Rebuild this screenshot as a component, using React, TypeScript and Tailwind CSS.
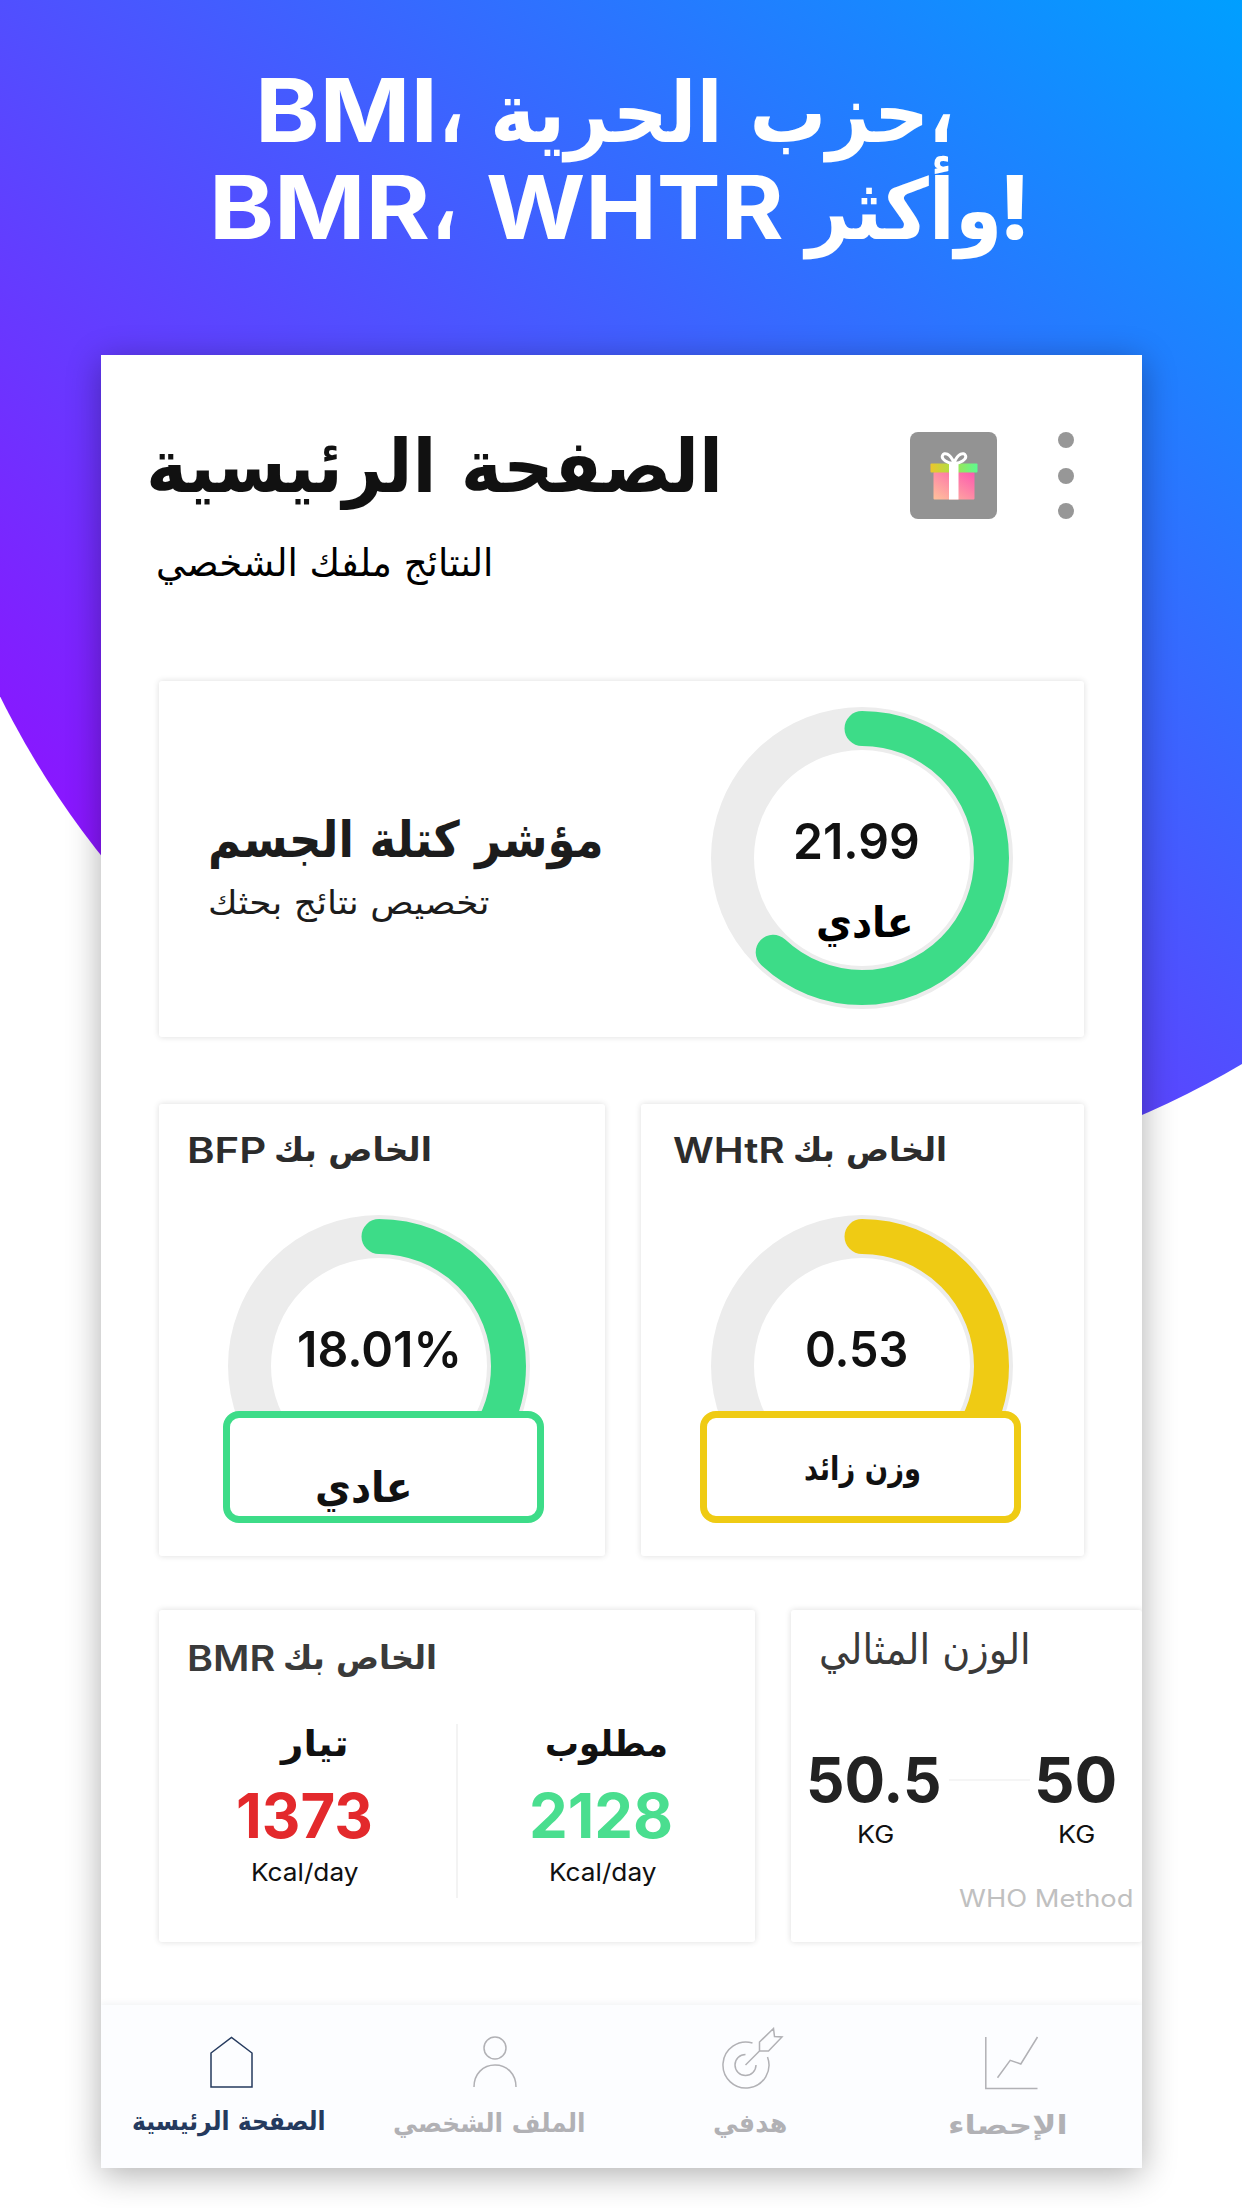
import { useLayoutEffect, useRef, useState } from "react";
import type { ReactNode } from "react";

const GREEN = "#3ddc88";
const YELLOW = "#efcb14";

interface FitProps {
  className: string;
  children: ReactNode;
}

// Stretches one line of text to the width of its box
function Fit({ className, children }: FitProps) {
  const inner = useRef<HTMLSpanElement>(null);
  const [scale, setScale] = useState(1);

  useLayoutEffect(() => {
    const el = inner.current;
    if (!el || !el.parentElement) return;
    setScale(el.parentElement.clientWidth / el.offsetWidth);
  }, [children]);

  return (
    <span className={"block shrink-0 " + className}>
      <span ref={inner} className="inline-block origin-left whitespace-nowrap" style={{ transform: `scaleX(${scale})` }}>
        {children}
      </span>
    </span>
  );
}

interface RingProps {
  value: number; // 0..1
  color: string;
  children: ReactNode;
}

function Ring({ value, color, children }: RingProps) {
  const length = 2 * Math.PI * 129.5;
  return (
    <div className="relative h-[302px] w-[302px] shrink-0">
      <svg viewBox="0 0 302 302" className="h-full w-full" fill="none">
        <circle cx="151" cy="151" r="129.5" stroke="#ececec" strokeWidth="43" />
        <circle
          cx="151"
          cy="151"
          r="129.5"
          stroke={color}
          strokeWidth="35"
          strokeLinecap="round"
          strokeDasharray={`${length * value} ${length}`}
          transform="rotate(-90 151 151)"
        />
      </svg>
      <div className="absolute inset-0 pt-[109px]">{children}</div>
    </div>
  );
}

const card = "rounded-[3px] bg-white shadow-[0_0_6px_rgba(0,0,0,0.14)]";
const navIcon = "h-16 w-20";
const arabic = "font-['DejaVu_Sans',sans-serif]";

function Backdrop() {
  return (
    <svg className="absolute inset-0 h-[2208px] w-[1242px]" viewBox="0 0 1242 2208">
      <defs>
        <linearGradient id="sky" gradientUnits="userSpaceOnUse" x1="-391" y1="455" x2="527" y2="-614">
          <stop offset="0" stopColor="#8c14ff" />
          <stop offset="1" stopColor="#009fff" />
        </linearGradient>
      </defs>
      <circle cx="791" cy="306" r="882" fill="url(#sky)" />
    </svg>
  );
}

function Gift() {
  return (
    <div className="flex h-[87px] w-[87px] items-center justify-center rounded-lg bg-[#939393]">
      <svg viewBox="0 0 48 48" className="h-12 w-12" fill="none">
        <defs>
          <linearGradient id="lid" x1="0" x2="1">
            <stop offset="0" stopColor="#ecc62c" />
            <stop offset="0.4" stopColor="#b4dc42" />
            <stop offset="1" stopColor="#5cfb90" />
          </linearGradient>
          <linearGradient id="box" x1="0" y1="1" x2="1" y2="0">
            <stop offset="0" stopColor="#ffc29a" />
            <stop offset="1" stopColor="#fd57b0" />
          </linearGradient>
        </defs>
        <rect x="3.5" y="20" width="41" height="27.5" rx="1" fill="url(#box)" />
        <rect x="0.5" y="11.5" width="47" height="9" rx="1" fill="url(#lid)" />
        <rect x="19" y="11" width="9.5" height="36.500" fill="#fff" />
        <path
          d="M24 11C18 12 11 7 12.5 3.5S20 1 24 11C28 1 34 0 35.5 3.5S30 12 24 11Z"
          stroke="#fff"
          strokeWidth="3"
          strokeLinejoin="round"
        />
      </svg>
    </div>
  );
}

interface EnergyProps {
  label: ReactNode;
  value: ReactNode;
  unitClass: string;
}

function Energy({ label, value, unitClass }: EnergyProps) {
  return (
    <div className="flex-1">
      {label}
      {value}
      <Fit className={"mt-[11px] h-[30px] w-[107px] text-[24.5px] leading-[30px] text-[#111] " + unitClass}>Kcal/day</Fit>
    </div>
  );
}

function BottomNav() {
  return (
    <nav className="mt-[63px] grid h-[163px] grid-cols-4 bg-[#fcfdff] pt-[22px] font-bold text-[#b1b1b5] shadow-[0_-2px_6px_rgba(30,50,90,0.06)]">
      <div className="flex flex-col items-center text-[#253a5e]">
        <svg viewBox="0 0 80 64" className={navIcon} fill="none" stroke="currentColor" strokeWidth="1.5">
          <path d="M20 26 40.500 10.500 61 26V60H20Z" />
        </svg>
        <Fit className={"mt-2.5 mr-1 h-10 w-[194px] text-[26px] leading-10 " + arabic}>الصفحة الرئيسية</Fit>
      </div>
      <div className="flex flex-col items-center">
        <svg viewBox="0 0 80 64" className={navIcon} fill="none" stroke="currentColor" strokeWidth="1.5">
          <circle cx="44" cy="21" r="11" />
          <path d="M23 60C23 47 32 38 44 38S65 47 65 60" />
        </svg>
        <Fit className={"mt-3 mr-1 h-10 w-[193px] text-[26px] leading-10 " + arabic}>الملف الشخصي</Fit>
      </div>
      <div className="flex flex-col items-center">
        <svg viewBox="0 0 80 64" className={navIcon} fill="none" stroke="currentColor" strokeWidth="1.5">
          <path d="M40.5 16A23 23 0 1 0 55.5 30" />
          <path d="M33.5 27.500A10.500 10.500 0 1 0 44 38" />
          <path d="M33.5 38 47.5 24V15L61.500 1.500 62.500 9.500 70 10 56.500 24H47.5" />
        </svg>
        <Fit className={"mt-3 mr-1 h-10 w-[74px] text-[26px] leading-10 " + arabic}>هدفي</Fit>
      </div>
      <div className="flex flex-col items-center">
        <svg viewBox="0 0 80 64" className={navIcon} fill="none" stroke="currentColor" strokeWidth="1.5">
          <path d="M13.8 10V61.5H65.5" />
          <path d="M25.5 50.7 38.2 33.3 48.8 37 65.500 10" />
        </svg>
        <Fit className={"mt-3.5 mr-2 h-10 w-[120px] text-[26px] leading-10 " + arabic}>الإحصاء</Fit>
      </div>
    </nav>
  );
}

export default function App() {
  return (
    <div className="relative h-[2208px] w-[1242px] overflow-hidden bg-white font-['Inter',sans-serif]">
      <Backdrop />

      <div className="relative flex flex-col">
        <h1 className="h-[355px] pt-[62px] font-bold text-white">
          <div className="ml-[255px] flex h-[97px] leading-[97px]">
            <Fit className="w-[183px] text-[88px]">BMI</Fit>
            <Fit className={"mr-[26px] ml-[1px] w-[25px] pt-[3px] text-[84px] " + arabic}>،</Fit>
            <Fit className={"w-[439px] pt-[3px] text-[84px] " + arabic}>حزب الحرية</Fit>
            <Fit className={"w-[25px] pt-[3px] text-[84px] " + arabic}>،</Fit>
          </div>
          <div className="ml-[209px] flex h-[97px] leading-[97px]">
            <Fit className="w-[221px] text-[88px]">BMR</Fit>
            <Fit className={"mr-[29px] ml-[2px] w-[25px] pt-[3px] text-[84px] " + arabic}>،</Fit>
            <Fit className="w-[298px] text-[88px]">WHTR</Fit>
            <Fit className={"ml-[22px] w-[196px] pt-[3px] text-[84px] " + arabic}>وأكثر</Fit>
            <Fit className="-ml-[3px] w-[32px] text-[88px] font-extrabold">!</Fit>
          </div>
        </h1>

        <main className="ml-[101px] w-[1041px] bg-white shadow-[0_6px_32px_rgba(0,0,0,0.32)]">
          <div className="overflow-hidden">
            <header className="flex h-[326px] items-start justify-between pr-[68px] pl-[45px]">
              <div className={"pt-[66px] " + arabic}>
                <Fit className="h-[90px] w-[577px] text-[74px] leading-[90px] font-bold text-[#111]">الصفحة الرئيسية</Fit>
                <Fit className="mt-[27px] ml-2.5 h-[50px] w-[337px] text-[38px] leading-[50px] text-black">
                  النتائج ملفك الشخصي
                </Fit>
              </div>
              <div className="flex gap-[61px] pt-[77px]">
                <Gift />
                <div className="flex flex-col justify-between">
                  <i className="h-4 w-4 rounded-full bg-[#979797]" />
                  <i className="h-4 w-4 rounded-full bg-[#979797]" />
                  <i className="h-4 w-4 rounded-full bg-[#979797]" />
                </div>
              </div>
            </header>

            <section className={"mx-[58px] flex h-[356px] pl-[49px] " + card}>
              <div className={"w-[503px] pt-[134px] text-[#1c1c1c] " + arabic}>
                <Fit className="h-[50px] w-[396px] text-[50px] leading-[50px] font-bold">مؤشر كتلة الجسم</Fit>
                <Fit className="mt-[18px] h-10 w-[281px] text-[33px] leading-10">تخصيص نتائج بحثك</Fit>
              </div>
              <div className="pt-[26px]">
                <Ring value={0.62} color={GREEN}>
                  <Fit className="ml-[82px] h-[50px] w-[127px] text-[50px] leading-[50px] font-semibold text-[#111]">21.99</Fit>
                  <Fit className={"mt-[32px] ml-[105px] h-[50px] w-[98px] text-[42px] leading-[50px] font-bold " + arabic}>
                    عادي
                  </Fit>
                </Ring>
              </div>
            </section>

            <div className="mx-[58px] mt-[67px] flex gap-9">
              <section className={"h-[452px] w-[446px] pt-[26px] " + card}>
                <div className="ml-[28px] flex h-10 leading-10 text-[#2c2c2c]">
                  <Fit className="w-[79px] text-[35px] font-semibold">BFP</Fit>
                  <Fit className={"ml-[8px] w-[158px] text-[33px] font-bold " + arabic}>الخاص بك</Fit>
                </div>
                <div className="mt-[45px] ml-[69px]">
                  <Ring value={0.45} color={GREEN}>
                    <Fit className="ml-[69px] h-[50px] w-[165px] text-[50px] leading-[50px] font-semibold text-[#111]">18.01%</Fit>
                  </Ring>
                </div>
                <div className="relative -mt-[106px] ml-[64px] h-[112px] w-[321px] rounded-2xl border-[7px] border-[#3ddc88] bg-white pt-[45px]">
                  <Fit className={"ml-[85px] h-[50px] w-[98px] text-[42px] leading-[50px] font-bold text-[#111] " + arabic}>
                    عادي
                  </Fit>
                </div>
              </section>

              <section className={"h-[452px] w-[443px] pt-[26px] " + card}>
                <div className="ml-[32px] flex h-10 leading-10 text-[#2c2c2c]">
                  <Fit className="w-[112px] text-[35px] font-semibold">WHtR</Fit>
                  <Fit className={"ml-[8px] w-[154px] text-[33px] font-bold " + arabic}>الخاص بك</Fit>
                </div>
                <div className="mt-[45px] ml-[70px]">
                  <Ring value={0.45} color={YELLOW}>
                    <Fit className="ml-[94px] h-[50px] w-[103px] text-[50px] leading-[50px] font-semibold text-[#111]">0.53</Fit>
                  </Ring>
                </div>
                <div className="relative -mt-[106px] ml-[59px] h-[112px] w-[321px] rounded-2xl border-[7px] border-[#efcb14] bg-white pt-[26px]">
                  <Fit className={"ml-[97px] h-[50px] w-[117px] text-[33px] leading-[50px] font-bold text-[#111] " + arabic}>
                    وزن زائد
                  </Fit>
                </div>
              </section>
            </div>

            <div className="mt-[54px] ml-[58px] flex gap-9">
              <section className={"h-[332px] w-[596px] shrink-0 pt-[28px] " + card}>
                <div className="ml-[28px] flex h-10 leading-10 text-[#3a3a3a]">
                  <Fit className="w-[88px] text-[35px] font-semibold">BMR</Fit>
                  <Fit className={"ml-[8px] w-[154px] text-[33px] font-bold " + arabic}>الخاص بك</Fit>
                </div>
                <div className="mt-[46px] flex h-[174px]">
                  <Energy
                    label={<Fit className={"ml-[122px] h-10 w-[67px] text-[36px] leading-10 font-bold text-[#111] " + arabic}>تيار</Fit>}
                    value={
                      <Fit className="mt-[22px] ml-[77px] h-[60px] w-[137px] text-[62px] leading-[60px] font-bold text-[#e3292c]">
                        1373
                      </Fit>
                    }
                    unitClass="ml-[92px]"
                  />
                  <div className="w-0.5 bg-[#f3f3f3]" />
                  <Energy
                    label={<Fit className={"ml-[87px] h-10 w-[123px] text-[36px] leading-10 font-bold text-[#111] " + arabic}>مطلوب</Fit>}
                    value={
                      <Fit className="mt-[22px] ml-[71px] h-[60px] w-[144px] text-[62px] leading-[60px] font-bold text-[#4ade8f]">
                        2128
                      </Fit>
                    }
                    unitClass="ml-[91px]"
                  />
                </div>
              </section>

              <section className={"h-[332px] flex-1 pt-[15px] " + card}>
                <Fit className={"ml-[28px] h-[50px] w-[212px] text-[42px] leading-[50px] text-[#3a3a3a] " + arabic}>الوزن المثالي</Fit>
                <div className="mt-[75px] flex h-[60px] items-center text-[62px] leading-[60px] font-bold text-[#222]">
                  <Fit className="ml-[15px] w-[136px]">50.5</Fit>
                  <div className="mr-[4px] ml-[7px] h-0.5 w-[81px] shrink-0 bg-[#f5f5f5]" />
                  <Fit className="w-[83px]">50</Fit>
                </div>
                <div className="mt-2.5 flex h-[30px] text-[24px] leading-[30px] text-[#111]">
                  <Fit className="ml-[66px] w-[37px]">KG</Fit>
                  <Fit className="ml-[164px] w-[37px]">KG</Fit>
                </div>
                <Fit className="mt-[34px] ml-[168px] h-[30px] w-[174px] text-[24px] leading-[30px] text-[#c0c0c0]">WHO Method</Fit>
              </section>
            </div>

            <BottomNav />
          </div>
        </main>
      </div>
    </div>
  );
}
